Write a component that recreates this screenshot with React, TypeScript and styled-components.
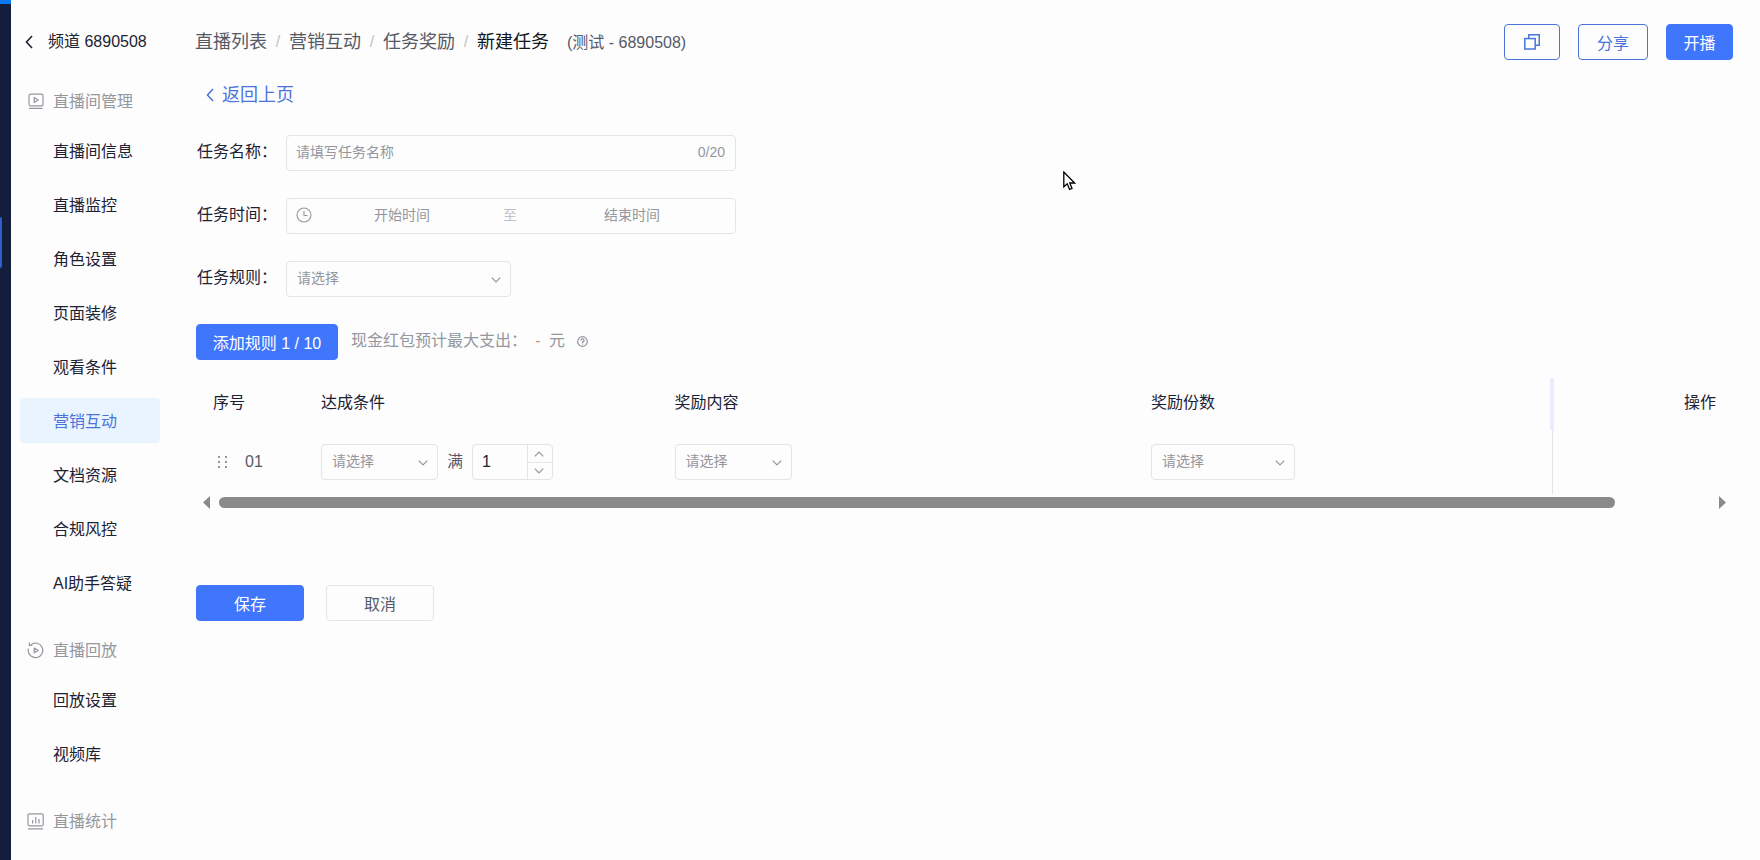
import React from "react";
import styled, { createGlobalStyle, css } from "styled-components";

const color = {
  page: "#fdfdfd",
  rail: "#141e3c",
  primary: "#3f76fc",
  link: "#4a74dc",
  ink: "#1c2233",
  text: "#555a66",
  muted: "#94979e",
  faint: "#bfc2c8",
  border: "#e3e4e7",
  active: "#e9f4fe",
  divider: "#e8edfb",
  thumb: "#8a8a8a",
};

const GlobalStyle = createGlobalStyle`
  *, *::before, *::after { box-sizing: border-box; }
  body {
    margin: 0;
    background: ${color.page};
    color: ${color.ink};
    font: 16px/24px "Liberation Sans", "Noto Sans CJK SC", sans-serif;
  }
  button, input, select { font: inherit; color: inherit; }
  a { color: inherit; text-decoration: none; }
`;

const Page = styled.div`
  position: relative;
  display: flex;
  min-height: 100vh;
`;

const Rail = styled.div`
  width: 11px;
  flex: none;
  background: ${color.rail};
  border-top: 4px solid #0a78f0;
`;

const RailMarker = styled.div`
  width: 2px;
  height: 51px;
  margin-top: 213px;
  border-radius: 0 2px 2px 0;
  background: #2f5fc8;
`;

const Sidebar = styled.aside`
  width: 158px;
  flex: none;
  padding: 0 9px 9px;
`;

const Channel = styled.a`
  display: flex;
  align-items: center;
  gap: 15px;
  height: 74px;
  padding: 10px 0 0 5px;
  white-space: nowrap;
`;

const Section = styled.section`
  & + & { margin-top: 18px; }
`;

const SectionTitle = styled.h2`
  display: flex;
  align-items: center;
  gap: 9px;
  height: 54px;
  margin: 0;
  padding: 2px 0 0 7px;
  font-size: 16px;
  font-weight: 400;
  color: ${color.muted};
  svg { width: 17px; height: 17px; flex: none; margin-bottom: 2px; }
`;

const NavList = styled.ul`
  display: flex;
  flex-direction: column;
  gap: 9px;
  margin: 0;
  padding: 0;
  list-style: none;
`;

const NavLink = styled.a<{ $active?: boolean }>`
  display: block;
  height: 45px;
  padding: 1px 0 0 33px;
  line-height: 45px;
  border-radius: 4px;
  ${(p) => p.$active && css`background: ${color.active}; color: ${color.link};`}
`;

const Main = styled.main`
  flex: 1;
  min-width: 0;
  padding: 24px 27px;
`;

const Header = styled.header`
  display: flex;
  align-items: center;
  justify-content: space-between;
  height: 36px;
`;

const Crumbs = styled.nav`
  display: flex;
  align-items: center;
  margin-left: -1px;
  font-size: 18px;
  color: ${color.text};
  white-space: nowrap;
`;

const Slash = styled.span`
  width: 22px;
  text-align: center;
  font-size: 16px;
  color: ${color.faint};
`;

const Current = styled.span`
  color: #12151c;
`;

const CrumbNote = styled.span`
  margin-left: 18px;
  padding-top: 1px;
  font-size: 16px;
`;

const Actions = styled.div`
  display: flex;
  gap: 18px;
`;

const Button = styled.button<{ $kind?: "primary" | "outline" | "plain"; $width?: number }>`
  display: flex;
  align-items: center;
  justify-content: center;
  height: 36px;
  width: ${(p) => (p.$width ? `${p.$width}px` : "auto")};
  padding: 3px 15px 0;
  border: 1px solid ${color.border};
  border-radius: 4px;
  background: transparent;
  color: ${color.text};
  white-space: nowrap;
  cursor: pointer;
  ${(p) => p.$kind === "primary" && css`background: ${color.primary}; border-color: ${color.primary}; color: #fff;`}
  ${(p) => p.$kind === "outline" && css`border-color: ${color.link}; color: ${color.link};`}
  svg { margin-bottom: 3px; }
`;

const BackLink = styled.a`
  display: inline-flex;
  align-items: center;
  gap: 8px;
  margin: 23px 0 28px 10px;
  font-size: 18px;
  line-height: 24px;
  color: ${color.link};
`;

const Form = styled.form`
  display: flex;
  flex-direction: column;
`;

const Field = styled.div`
  display: flex;
  align-items: center;
  margin-bottom: 27px;
`;

const Label = styled.label`
  width: 90px;
  flex: none;
  padding: 0 0 2px 1px;
`;

const boxed = css`
  height: 36px;
  border: 1px solid ${color.border};
  border-radius: 4px;
  background: transparent;
  font-size: 14px;
`;

const Box = styled.div`
  ${boxed}
  display: flex;
  align-items: center;
  width: 450px;
  padding: 0 10px 2px 9px;
  color: ${color.muted};
  svg { flex: none; }
`;

const BareInput = styled.input<{ $center?: boolean }>`
  flex: 1;
  min-width: 0;
  padding: 0;
  border: 0;
  outline: 0;
  background: transparent;
  color: ${color.ink};
  text-align: ${(p) => (p.$center ? "center" : "left")};
  &::placeholder { color: ${color.muted}; opacity: 1; }
`;

const RangeWord = styled.span`
  width: 50px;
  flex: none;
  padding-left: 11px;
  color: ${color.faint};
`;

const RangeBox = styled(Box)`
  padding-right: 13px;
`;

const SelectWrap = styled.div<{ $width: number }>`
  position: relative;
  width: ${(p) => p.$width}px;
  flex: none;
  color: ${color.muted};
  svg {
    position: absolute;
    right: 10px;
    top: 16px;
    pointer-events: none;
  }
`;

const NativeSelect = styled.select`
  ${boxed}
  display: block;
  width: 100%;
  padding: 0 28px 2px 10px;
  appearance: none;
  outline: 0;
  color: ${color.muted};
`;

const RuleBar = styled.div`
  display: flex;
  align-items: center;
  color: ${color.muted};
`;

const Budget = styled.p`
  display: flex;
  align-items: center;
  margin: 0 0 0 13px;
  padding-bottom: 2px;
`;

const Amount = styled.span`
  width: 22px;
  color: #d2906a;
  text-align: center;
`;

const HelpButton = styled.button`
  display: flex;
  margin-left: 12px;
  padding: 0;
  border: 0;
  background: none;
  color: ${color.muted};
`;

const Table = styled.table`
  width: 100%;
  margin-top: 18px;
  border-collapse: collapse;
  table-layout: fixed;
  color: ${color.text};
`;

const Th = styled.th<{ $width?: string; $last?: boolean }>`
  width: ${(p) => p.$width ?? "auto"};
  height: 52px;
  padding: 0 17px 2px;
  font-weight: 400;
  text-align: ${(p) => (p.$last ? "right" : "left")};
  color: ${color.ink};
  ${(p) => p.$last && css`border-left: 4px solid ${color.divider};`}
`;

const Td = styled.td<{ $last?: boolean }>`
  height: 64px;
  padding: 0 17px;
  ${(p) => p.$last && css`border-left: 1px solid ${color.border};`}
`;

const Inline = styled.div<{ $gap: number }>`
  display: flex;
  align-items: center;
  gap: ${(p) => p.$gap}px;
`;

const DragHandle = styled.button`
  display: flex;
  padding: 0;
  border: 0;
  margin-left: 5px;
  background: none;
  color: ${color.muted};
`;

const Stepper = styled.div`
  ${boxed}
  display: flex;
  width: 81px;
  input { padding-left: 9px; font-size: 16px; }
`;

const StepButtons = styled.div`
  display: grid;
  grid-template-rows: 1fr 1fr;
  width: 25px;
  border-left: 1px solid ${color.border};
  button {
    display: flex;
    align-items: center;
    justify-content: center;
    padding: 0 2px 0 0;
    border: 0;
    background: none;
    color: ${color.muted};
  }
  button + button { border-top: 1px solid ${color.border}; }
`;

const ScrollBar = styled.div`
  display: flex;
  align-items: center;
  gap: 9px;
  height: 13px;
  margin-top: 2px;
  padding: 0 7px;
  color: ${color.thumb};
  svg { flex: none; }
`;

const Track = styled.div`
  flex: 1;
`;

const Thumb = styled.div`
  width: 93.6%;
  height: 11px;
  border-radius: 6px;
  background: ${color.thumb};
`;

const Footer = styled.div`
  display: flex;
  gap: 22px;
  margin-top: 76px;
`;

const Pointer = styled.svg`
  position: absolute;
  left: 1063px;
  top: 171px;
  pointer-events: none;
`;

const Chevron = ({ dir, w = 10, h = 6, weight = 1.2 }: { dir: "up" | "down" | "left"; w?: number; h?: number; weight?: number }) => {
  const d = {
    down: "M0.8 0.6 L5 5 L9.2 0.6",
    up: "M0.8 5.4 L5 1 L9.2 5.4",
    left: "M7 1 L1.5 7 L7 13",
  }[dir];
  return (
    <svg width={w} height={h} viewBox={dir === "left" ? "0 0 8 14" : "0 0 10 6"} fill="none" stroke="currentColor" strokeWidth={weight} aria-hidden>
      <path d={d} />
    </svg>
  );
};

const RoomIcon = () => (
  <svg viewBox="0 0 17 17" fill="none" stroke="currentColor" strokeWidth="1.2" strokeLinejoin="round" aria-hidden>
    <rect x="2" y="1.2" width="14" height="11.6" rx="1.6" />
    <path d="M7.2 4.6 V9.4 L11.2 7 Z M2 15.4 H15.4" />
  </svg>
);

const ReplayIcon = () => (
  <svg viewBox="0 0 17 17" fill="none" stroke="currentColor" strokeWidth="1.2" strokeLinejoin="round" aria-hidden>
    <path d="M4 2.6 A7.3 7.3 0 1 1 1.2 8.4 V6.4" />
    <path d="M2.4 0.6 V3.4 H5.4 M7.2 6 V10.8 L11.2 8.4 Z" />
  </svg>
);

const StatsIcon = () => (
  <svg viewBox="0 0 17 17" fill="none" stroke="currentColor" strokeWidth="1.2" aria-hidden>
    <rect x="1" y="0.8" width="15.2" height="12" rx="1.2" />
    <path d="M5.6 7 V10.6 M8.8 4 V10.6 M12 6 V10.6 M1 15.8 H16" />
  </svg>
);

const Picker = ({ width, label, id }: { width: number; label?: string; id?: string }) => (
  <SelectWrap $width={width}>
    <NativeSelect id={id} aria-label={label} defaultValue="">
      <option value="">请选择</option>
    </NativeSelect>
    <Chevron dir="down" />
  </SelectWrap>
);

const sections = [
  {
    title: "直播间管理",
    Icon: RoomIcon,
    items: ["直播间信息", "直播监控", "角色设置", "页面装修", "观看条件", "营销互动", "文档资源", "合规风控", "AI助手答疑"],
  },
  { title: "直播回放", Icon: ReplayIcon, items: ["回放设置", "视频库"] },
  { title: "直播统计", Icon: StatsIcon, items: [] },
];

const trail = ["直播列表", "营销互动", "任务奖励"];

export default function App() {
  return (
    <>
      <GlobalStyle />
      <Page>
        <Rail>
          <RailMarker />
        </Rail>

        <Sidebar>
          <Channel href="#">
            <Chevron dir="left" w={8} h={14} weight={1.6} />
            频道 6890508
          </Channel>
          {sections.map(({ title, Icon, items }) => (
            <Section key={title}>
              <SectionTitle>
                <Icon />
                {title}
              </SectionTitle>
              <NavList>
                {items.map((item) => (
                  <li key={item}>
                    <NavLink href="#" $active={item === "营销互动"}>{item}</NavLink>
                  </li>
                ))}
              </NavList>
            </Section>
          ))}
        </Sidebar>

        <Main>
          <Header>
            <Crumbs aria-label="面包屑">
              {trail.map((name) => (
                <React.Fragment key={name}>
                  <a href="#">{name}</a>
                  <Slash>/</Slash>
                </React.Fragment>
              ))}
              <Current>新建任务</Current>
              <CrumbNote>(测试 - 6890508)</CrumbNote>
            </Crumbs>
            <Actions>
              <Button type="button" $kind="outline" $width={56} aria-label="复制">
                <svg width="16" height="16" viewBox="0 0 16 16" fill="none" stroke="currentColor" strokeWidth="1.5" aria-hidden>
                  <rect x="0.8" y="4.6" width="10.4" height="10.4" />
                  <path d="M4.8 4.4 V0.8 H15.2 V11.2 H11.4" />
                </svg>
              </Button>
              <Button type="button" $kind="outline" $width={70}>分享</Button>
              <Button type="button" $kind="primary" $width={67}>开播</Button>
            </Actions>
          </Header>

          <BackLink href="#">
            <Chevron dir="left" w={8} h={14} weight={1.5} />
            返回上页
          </BackLink>

          <Form onSubmit={(e) => e.preventDefault()}>
            <Field>
              <Label htmlFor="task-name">任务名称：</Label>
              <Box>
                <BareInput id="task-name" maxLength={20} placeholder="请填写任务名称" />
                <span>0/20</span>
              </Box>
            </Field>
            <Field>
              <Label htmlFor="task-start">任务时间：</Label>
              <RangeBox>
                <svg width="16" height="16" viewBox="0 0 16 16" fill="none" stroke="currentColor" strokeWidth="1.1" aria-hidden>
                  <circle cx="8" cy="8" r="7" />
                  <path d="M8 4 V8.5 H11.6" />
                </svg>
                <BareInput id="task-start" $center placeholder="开始时间" />
                <RangeWord>至</RangeWord>
                <BareInput aria-label="结束时间" $center placeholder="结束时间" />
              </RangeBox>
            </Field>
            <Field>
              <Label htmlFor="task-rule">任务规则：</Label>
              <Picker id="task-rule" width={225} />
            </Field>

            <RuleBar>
              <Button type="button" $kind="primary" $width={142}>添加规则 1 / 10</Button>
              <Budget>
                现金红包预计最大支出：
                <Amount>-</Amount>
                元
                <HelpButton type="button" aria-label="说明">
                  <svg width="11" height="11" viewBox="0 0 11 11" fill="none" stroke="currentColor" strokeWidth="1.2" aria-hidden>
                    <circle cx="5.5" cy="5.5" r="4.8" />
                    <path d="M3.9 4.5 A1.6 1.6 0 1 1 5.5 6 V6.9 M5.5 7.6 V8.6" />
                  </svg>
                </HelpButton>
              </Budget>
            </RuleBar>

            <Table>
              <thead>
                <tr>
                  <Th $width="108px">序号</Th>
                  <Th $width="23%">达成条件</Th>
                  <Th $width="31%">奖励内容</Th>
                  <Th>奖励份数</Th>
                  <Th $width="181px" $last>操作</Th>
                </tr>
              </thead>
              <tbody>
                <tr>
                  <Td>
                    <Inline $gap={17}>
                      <DragHandle type="button" aria-label="拖动排序">
                        <svg width="10" height="14" viewBox="0 0 10 14" fill="currentColor" aria-hidden>
                          {[1, 6, 11].map((y) => (
                            <React.Fragment key={y}>
                              <rect x="0" y={y} width="2" height="2" />
                              <rect x="7" y={y} width="2" height="2" />
                            </React.Fragment>
                          ))}
                        </svg>
                      </DragHandle>
                      01
                    </Inline>
                  </Td>
                  <Td>
                    <Inline $gap={9}>
                      <Picker width={117} label="达成条件" />
                      满
                      <Stepper>
                        <BareInput aria-label="数量" defaultValue="1" />
                        <StepButtons>
                          <button type="button" aria-label="增加"><Chevron dir="up" /></button>
                          <button type="button" aria-label="减少"><Chevron dir="down" /></button>
                        </StepButtons>
                      </Stepper>
                    </Inline>
                  </Td>
                  <Td><Picker width={117} label="奖励内容" /></Td>
                  <Td><Picker width={144} label="奖励份数" /></Td>
                  <Td $last />
                </tr>
              </tbody>
            </Table>
            <ScrollBar aria-hidden>
              <svg width="7" height="13" viewBox="0 0 7 13" fill="currentColor"><path d="M7 0 V13 L0 6.5 Z" /></svg>
              <Track>
                <Thumb />
              </Track>
              <svg width="7" height="13" viewBox="0 0 7 13" fill="currentColor"><path d="M0 0 V13 L7 6.5 Z" /></svg>
            </ScrollBar>

            <Footer>
              <Button type="submit" $kind="primary" $width={108}>保存</Button>
              <Button type="button" $width={108}>取消</Button>
            </Footer>
          </Form>
        </Main>

        <Pointer width="13" height="20" viewBox="0 0 13 20" fill="#fff" stroke="#000" strokeWidth="1.3" aria-hidden>
          <path d="M0.8 1 V15.8 L4.2 12.8 L6.6 18.4 L9 17.4 L6.8 12 H11.6 Z" />
        </Pointer>
      </Page>
    </>
  );
}
